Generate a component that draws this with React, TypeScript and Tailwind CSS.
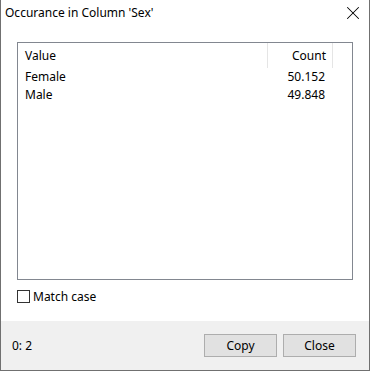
import { X } from 'lucide-react';

const rows = [
    { value: 'Female', count: '50.152' },
    { value: 'Male', count: '49.848' },
];

export default function App() {
    return (
        <div className="w-[370px] h-[371px] bg-white border-x border-b border-[#707070] flex flex-col text-[12px] text-black" style={{ fontFamily: '"Noto Sans", "Segoe UI", sans-serif' }}>
            {/* title bar */}
            <div className="h-[30px] flex items-start justify-between pl-[4px] pr-[5px] pt-[4px]">
                <span className="leading-[18px]">Occurance in Column 'Sex'</span>
                <X className="w-[22px] h-[22px] -mt-[2px]" strokeWidth={1.1} />
            </div>

            {/* body */}
            <div className="flex-1 flex flex-col pl-[16px] pr-[16px] pt-[12px]">
                <div className="h-[238px] border border-[#828790] flex flex-col">
                    <div className="flex h-[25px] items-center">
                        <div className="w-[250px] pl-[7px] border-r border-[#e5e5e5] h-full flex items-center">Value</div>
                        <div className="w-[65px] pr-[6px] border-r border-[#e5e5e5] h-full flex items-center justify-end">Count</div>
                    </div>
                    {rows.map((r) => (
                        <div key={r.value} className="flex h-[18px] items-center">
                            <div className="w-[250px] pl-[7px]">{r.value}</div>
                            <div className="w-[65px] pr-[8px] text-right">{r.count}</div>
                        </div>
                    ))}
                </div>

                <label className="flex items-center gap-[3px] mt-[9px] h-[15px]">
                    <span className="w-[13px] h-[13px] border border-[#333333] bg-white" />
                    <span>Match case</span>
                </label>
            </div>

            {/* footer */}
            <div className="h-[49px] bg-[#f0f0f0] flex items-center justify-between pl-[11px] pr-[13px]">
                <span>0: 2</span>
                <div className="flex gap-[6px]">
                    <button className="w-[73px] h-[23px] bg-[#e1e1e1] border border-[#adadad]">Copy</button>
                    <button className="w-[73px] h-[23px] bg-[#e1e1e1] border border-[#adadad]">Close</button>
                </div>
            </div>
        </div>
    );
}
